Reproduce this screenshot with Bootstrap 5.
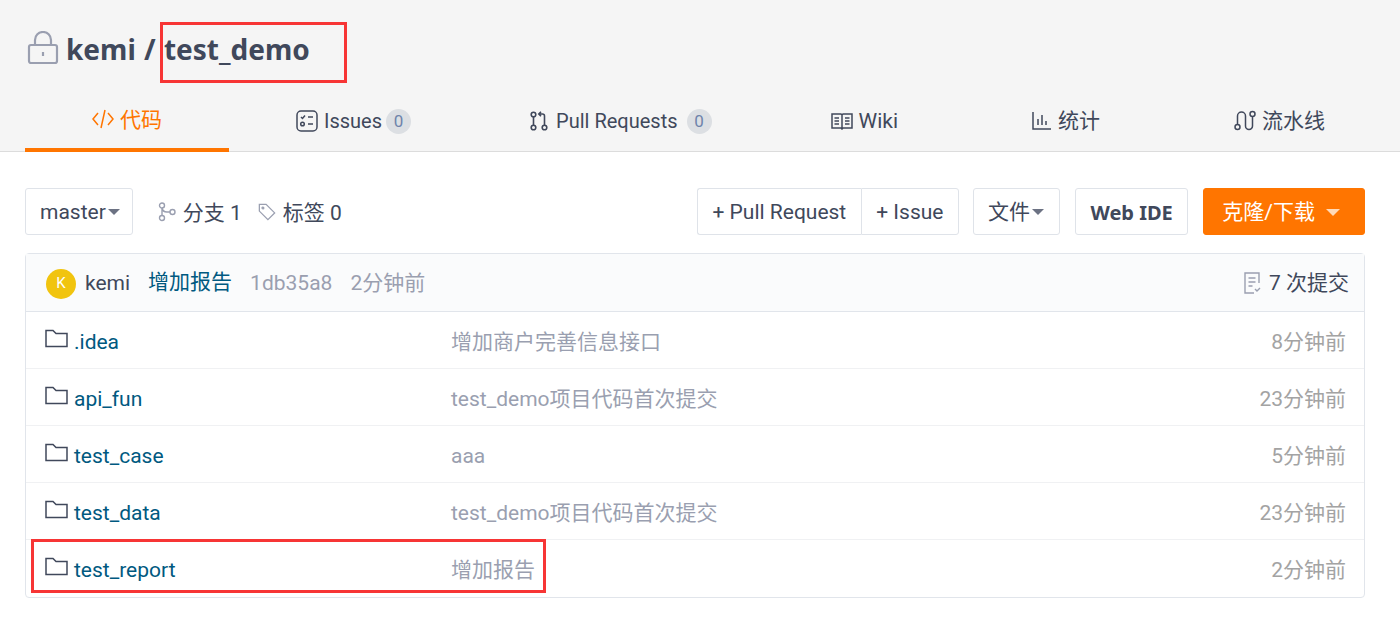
<!DOCTYPE html>
<html lang="en">
<head>
    <meta charset="UTF-8">
    <meta name="viewport" content="width=device-width, initial-scale=1.0">
    <title>test_demo</title>
    <link href="https://cdn.jsdelivr.net/npm/bootstrap@5.3.0/dist/css/bootstrap.min.css" rel="stylesheet">
    <style>
        body {
            font-family: Roboto, "Noto Sans CJK SC", sans-serif;
            font-size: 21px;
            color: #40485b;
            background: #fff;
            position: relative;
            height: 627px;
            overflow: hidden;
        }
        a { text-decoration: none; }
        svg { fill: none; stroke: currentColor; flex-shrink: 0; }
        .repo-head { background: #f5f5f5; border-bottom: 1px solid #dcdcdc; height: 152px; padding: 0 25px; }
        .repo-title { height: 90px; font-family: "Noto Sans", sans-serif; font-size: 28px; word-spacing: 1px; font-weight: 700; color: #40485b; line-height: 1; padding-top: 8px; }
        .repo-title svg { color: #9a9fb0; margin: -2px 7px 0 2px; }
        .repo-tabs { flex-wrap: nowrap; height: 62px; width: 1375px; }
        .repo-tabs .nav-link { color: #40485b; padding: 0 67px; height: 62px; display: flex; align-items: center; gap: 6px; line-height: 1; white-space: nowrap; }
        .repo-tabs .nav-link.active { color: #ff7500; border-bottom: 4px solid #ff7500; }
        .repo-tabs .nav-link.active span { margin-top: 2px; }
        .repo-tabs .pr-tab { gap: 8px; }
        .tab-latin { font-size: 20px; }
        .tab-count { background: #dcdfe3; color: #6f84ab; width: 25px; height: 25px; border-radius: 50%; font-size: 17px; display: flex; align-items: center; justify-content: center; margin-left: -2px; margin-right: -15px; }
        .pr-tab .tab-count { margin-left: 1px; }
        .toolbar { height: 47px; margin: 36px 35px 18px 25px; }
        .tool-btn { background: #fff; border: 1px solid #dfe3e9; border-radius: 3px; color: #40485b; height: 47px; padding: 3px 14px 0; font-size: 21px; display: flex; align-items: center; white-space: nowrap; }
        .tool-btn.branch { padding-right: 12px; }
        .tool-gap { margin-left: 15px; }
        .tool-caret { display: inline-block; width: 0; height: 0; border-left: 6px solid transparent; border-right: 6px solid transparent; border-top: 6px solid #6c7283; margin-left: 2px; margin-top: -2px; }
        .tool-btn.files { padding-right: 15px; margin-left: 14px; }
        .tool-btn.webide { font-family: "Noto Sans", sans-serif; font-size: 20px; font-weight: 700; padding: 3px 14.500px 0; }
        .tool-btn.clone { background: #ff7500; border-color: #ff7500; color: #fff; padding: 3px 24px 0 18px; }
        .tool-btn.clone .tool-caret { border-left-width: 7px; border-right-width: 7px; border-top: 7px solid #ffd9b8; margin-left: 11px; }
        .btn-join { display: flex; }
        .btn-join .tool-btn { padding: 3px 14.500px 0; }
        .btn-join .tool-btn:first-child { border-radius: 3px 0 0 3px; border-right: 0; }
        .btn-join .tool-btn:last-child { border-radius: 0 3px 3px 0; }
        .stat-link { color: #40485b; gap: 7px; }
        .stat-link span { margin-top: 4px; }
        .stat-link svg { color: #9a9fb0; }
        .stat-branch { margin-left: 25px; }
        .stat-tag { margin-left: 16px; }
        .file-box { margin: 0 35px 0 25px; border: 1px solid #e1e5eb; border-radius: 4px; --bs-card-bg: #fff; }
        .commit-head { height: 58px; background: #fafbfc; border-bottom: 1px solid #e1e5eb; padding: 0 15px 0 20px; }
        .commit-head span { margin-top: 2px; }
        .commit-gap { margin-right: 18px; }
        .avatar { width: 30px; height: 30px; border-radius: 50%; background: #f1c40f; color: #fff; font-size: 15px; display: flex; align-items: center; justify-content: center; margin-right: 9px; }
        .commit-msg { color: #005980; }
        .muted-txt { color: #9a9fb0; }
        .commit-head .stat-link { gap: 6px; }
        .file-row { height: 57px; border-bottom: 1px solid #f0f1f3; padding: 0 18px 0 19px; }
        .file-row:last-child { border-bottom: 0; height: 57px; }
        .file-name { width: 406px; color: #005980; gap: 6px; }
        .file-name svg { color: #40485b; margin-top: -4px; }
        .file-name span, .file-note, .file-age { margin-top: 5px; }
        .file-note { color: #9a9fb0; }
        .file-age { color: #a3a3a3; }
        .mark-box { position: absolute; border: 3px solid #f73535; pointer-events: none; }
        .mark-title { left: 160px; top: 22px; width: 187px; height: 61px; }
        .mark-row { left: 31px; top: 539px; width: 515px; height: 54px; }
    </style>
</head>
<body>
    <div class="repo-head">
        <div class="repo-title d-flex align-items-center">
            <svg width="32" height="34" viewBox="0 0 32 34" stroke-width="2.2"><rect x="2" y="14" width="28" height="18" rx="2"/><path d="M8 14V9a8 8 0 0 1 16 0v5"/><path d="M16 21v4"/></svg>
            <span>kemi / test_demo</span>
        </div>
        <ul class="nav repo-tabs">
            <li class="nav-item"><a class="nav-link active" href="#">
                <svg width="22" height="20" viewBox="0 0 22 20" stroke-width="1.5"><path d="M6 4 1 10l5 6M16 4l5 6-5 6M13 1 9 19"/></svg>
                <span>代码</span></a></li>
            <li class="nav-item"><a class="nav-link" href="#">
                <svg width="22" height="22" viewBox="0 0 22 22" stroke-width="1.5"><rect x="1" y="1" width="20" height="20" rx="4"/><path d="M5 7l1.500 1.500L9 5.500M12 7h5M12 14h5"/><circle cx="6.500" cy="14" r="1.800"/></svg>
                <span class="tab-latin">Issues</span><span class="tab-count">0</span></a></li>
            <li class="nav-item"><a class="nav-link pr-tab" href="#">
                <svg width="18" height="20" viewBox="0 0 18 20" stroke-width="1.600"><circle cx="3.500" cy="3.500" r="2.300"/><circle cx="3.500" cy="16.500" r="2.300"/><circle cx="14.500" cy="16.500" r="2.300"/><path d="M3.500 6v8M14.500 14V5a2 2 0 0 0-2-2H9M11 .8 8.800 3 11 5.200"/></svg>
                <span class="tab-latin">Pull Requests</span><span class="tab-count">0</span></a></li>
            <li class="nav-item"><a class="nav-link" href="#">
                <svg width="22" height="18" viewBox="0 0 22 18" stroke-width="1.500"><path d="M1 2h9l1 1 1-1h9v14h-9l-1 1-1-1H1zM11 3v13M3.500 6H8M3.500 9H8M3.500 12H8M14 6h4.500M14 9h4.500M14 12h4.500"/></svg>
                <span>Wiki</span></a></li>
            <li class="nav-item"><a class="nav-link" href="#">
                <svg width="20" height="20" viewBox="0 0 20 20" stroke-width="1.500"><path d="M1 1v17h18M6 14V8M10 14V4M14 14v-4"/></svg>
                <span>统计</span></a></li>
            <li class="nav-item"><a class="nav-link" href="#">
                <svg width="22" height="22" viewBox="0 0 22 22" stroke-width="1.500"><circle cx="3.500" cy="17" r="2.500"/><circle cx="18.500" cy="4" r="2.500"/><path d="M3.500 14.500V6a4 4 0 0 1 8 0v10a3.500 3.500 0 0 0 7 0V6.500"/></svg>
                <span>流水线</span></a></li>
        </ul>
    </div>

    <div class="toolbar d-flex align-items-center">
        <a class="tool-btn branch" href="#">master<i class="tool-caret"></i></a>
        <a class="stat-link stat-branch d-flex align-items-center" href="#">
            <svg width="18" height="20" viewBox="0 0 18 20" stroke-width="1.400"><circle cx="4" cy="3.500" r="2.500"/><circle cx="4" cy="16" r="2.500"/><circle cx="14.500" cy="10" r="2.500"/><path d="M4 6v7.500M12 10H9a5 5 0 0 1-5-4"/></svg>
            <span>分支 1</span></a>
        <a class="stat-link stat-tag d-flex align-items-center" href="#">
            <svg width="18" height="18" viewBox="0 0 20 20" stroke-width="1.400"><path d="M1.500 1.500h7.500l9.500 9.500-7.500 7.500L1.500 9z"/><circle cx="5.500" cy="5.500" r="1"/></svg>
            <span>标签 0</span></a>
        <div class="btn-join ms-auto">
            <a class="tool-btn" href="#">+ Pull Request</a>
            <a class="tool-btn" href="#">+ Issue</a>
        </div>
        <a class="tool-btn files" href="#">文件<i class="tool-caret"></i></a>
        <a class="tool-btn webide tool-gap" href="#">Web IDE</a>
        <a class="tool-btn clone tool-gap" href="#">克隆/下载<i class="tool-caret"></i></a>
    </div>

    <div class="card file-box">
        <div class="commit-head d-flex align-items-center">
            <span class="avatar">K</span>
            <span class="commit-gap">kemi</span>
            <a class="commit-msg commit-gap" href="#"><span>增加报告</span></a>
            <span class="muted-txt commit-gap">1db35a8</span>
            <span class="muted-txt">2分钟前</span>
            <a class="stat-link d-flex align-items-center ms-auto" href="#">
                <svg width="20" height="22" viewBox="0 0 20 22" stroke-width="1.400"><path d="M16 11V1H2v20h9M5.500 6h7M5.500 10h7M5.500 14h4M12 17l2 2 3-3"/></svg>
                <span>7 次提交</span></a>
        </div>
        <div class="file-row d-flex align-items-center">
            <a class="file-name d-flex align-items-center" href="#"><svg width="23" height="19" viewBox="0 0 23 19" stroke-width="1.500"><path d="M1 17.500V1.500h7l3 3h11v13z"/></svg><span>.idea</span></a>
            <span class="file-note">增加商户完善信息接口</span>
            <span class="file-age ms-auto">8分钟前</span>
        </div>
        <div class="file-row d-flex align-items-center">
            <a class="file-name d-flex align-items-center" href="#"><svg width="23" height="19" viewBox="0 0 23 19" stroke-width="1.500"><path d="M1 17.500V1.500h7l3 3h11v13z"/></svg><span>api_fun</span></a>
            <span class="file-note">test_demo项目代码首次提交</span>
            <span class="file-age ms-auto">23分钟前</span>
        </div>
        <div class="file-row d-flex align-items-center">
            <a class="file-name d-flex align-items-center" href="#"><svg width="23" height="19" viewBox="0 0 23 19" stroke-width="1.500"><path d="M1 17.500V1.500h7l3 3h11v13z"/></svg><span>test_case</span></a>
            <span class="file-note">aaa</span>
            <span class="file-age ms-auto">5分钟前</span>
        </div>
        <div class="file-row d-flex align-items-center">
            <a class="file-name d-flex align-items-center" href="#"><svg width="23" height="19" viewBox="0 0 23 19" stroke-width="1.500"><path d="M1 17.500V1.500h7l3 3h11v13z"/></svg><span>test_data</span></a>
            <span class="file-note">test_demo项目代码首次提交</span>
            <span class="file-age ms-auto">23分钟前</span>
        </div>
        <div class="file-row d-flex align-items-center">
            <a class="file-name d-flex align-items-center" href="#"><svg width="23" height="19" viewBox="0 0 23 19" stroke-width="1.500"><path d="M1 17.500V1.500h7l3 3h11v13z"/></svg><span>test_report</span></a>
            <span class="file-note">增加报告</span>
            <span class="file-age ms-auto">2分钟前</span>
        </div>
    </div>

    <div class="mark-box mark-title"></div>
    <div class="mark-box mark-row"></div>

    <script src="https://cdn.jsdelivr.net/npm/bootstrap@5.3.0/dist/js/bootstrap.bundle.min.js"></script>
</body>
</html>
